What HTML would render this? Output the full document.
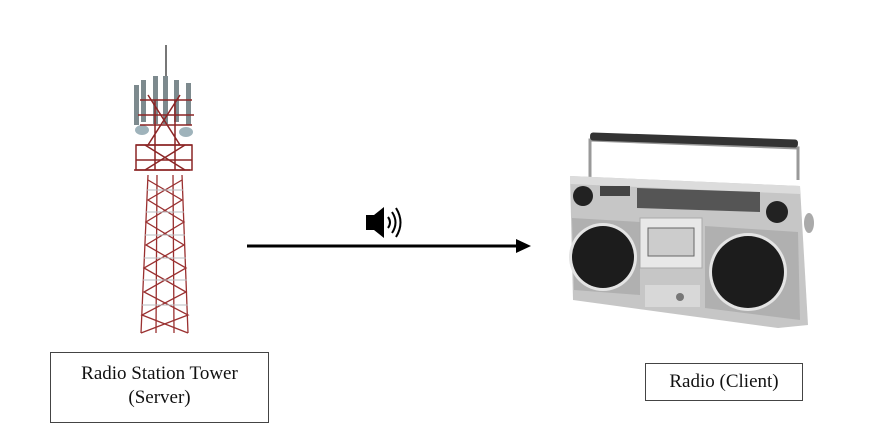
<!DOCTYPE html>
<html><head><meta charset="utf-8"><style>
html,body{margin:0;padding:0;background:#fff;}
body{width:871px;height:440px;position:relative;overflow:hidden;font-family:"Liberation Serif",serif;}
.box{position:absolute;border:1px solid #444;background:#fff;color:#111;text-align:center;font-size:19px;line-height:24px;box-sizing:border-box;}
</style></head><body>
<svg width="871" height="440" style="position:absolute;left:0;top:0">
<!-- tower -->
<g>
<line x1="166" y1="45" x2="166" y2="90" stroke="#777" stroke-width="2"/>
<g fill="#7d8a8e">
<rect x="134" y="85" width="5" height="40"/><rect x="141" y="80" width="5" height="42"/>
<rect x="153" y="76" width="5" height="48"/><rect x="163" y="76" width="5" height="48"/>
<rect x="174" y="80" width="5" height="42"/><rect x="186" y="83" width="5" height="42"/>
</g>
<g fill="#9fb3bb"><ellipse cx="142" cy="130" rx="7" ry="5"/><ellipse cx="186" cy="132" rx="7" ry="5"/></g>
<g stroke="#8b2525" stroke-width="1.5" fill="none">
<path d="M140 100 L192 100 M138 115 L194 115 M140 125 L192 125 M136 145 L192 145 M136 160 L192 160 M134 170 L190 170"/>
<path d="M148 95 L180 145 M180 95 L148 145 M145 145 L185 170 M185 145 L145 170 M155 100 L155 170 M175 100 L175 170"/>
<rect x="136" y="145" width="56" height="25"/>
</g>
<g stroke="#9a3030" stroke-width="1.3" fill="none">
<path d="M148 175 L141 333 M182 175 L188 333 M157 175 L156 333 M173 175 L174 333"/>
<path d="M148 180 L182 200 L146 222 L184 245 L144 268 L186 292 L142 315 L188 333"/>
<path d="M182 180 L148 200 L184 222 L146 245 L186 268 L144 292 L188 315 L141 333"/>
</g>
<g stroke="#b8bec2" stroke-width="1" fill="none">
<path d="M147 190 L183 190 M146 212 L184 212 M145 235 L185 235 M144 258 L186 258 M143 280 L187 280 M142 305 L188 305"/>
</g>
</g>
<!-- arrow -->
<line x1="247" y1="246" x2="518" y2="246" stroke="#000" stroke-width="3"/>
<polygon points="516,239 531,246 516,253" fill="#000"/>
<!-- speaker -->
<polygon points="366,215 374,215 384,207 384,238 374,230 366,230" fill="#000"/>
<path d="M388 217 Q392 222.5 388 228" stroke="#000" stroke-width="2" fill="none"/>
<path d="M392 212 Q399 222.5 392 233" stroke="#000" stroke-width="2" fill="none"/>
<path d="M396 208 Q405 222.5 396 237" stroke="#000" stroke-width="2" fill="none"/>
<!-- boombox -->
<g>
<path d="M590 178 L590 140 L798 148 L798 180" stroke="#999" stroke-width="3" fill="none"/>
<rect x="590" y="136" width="208" height="8" rx="3" fill="#333" transform="rotate(2 694 140)"/>
<path d="M570 176 L800 186 L808 325 L778 328 L573 300 Z" fill="#c6c6c6"/>
<path d="M570 176 L800 186 L800 194 L570 184 Z" fill="#dcdcdc"/>
<path d="M572 218 L640 222 L640 295 L574 290 Z" fill="#b0b0b0"/>
<path d="M705 226 L798 232 L800 320 L705 308 Z" fill="#b0b0b0"/>
<rect x="600" y="186" width="30" height="10" fill="#444"/>
<path d="M637 188 L760 192 L760 212 L637 208 Z" fill="#555"/>
<rect x="640" y="218" width="62" height="50" fill="#e8e8e8" stroke="#aaa"/>
<rect x="648" y="228" width="46" height="28" fill="#ccc" stroke="#666"/>
<circle cx="583" cy="196" r="10" fill="#222"/>
<circle cx="777" cy="212" r="11" fill="#222"/>
<circle cx="603" cy="257" r="34" fill="#e4e4e4"/>
<circle cx="603" cy="257" r="31" fill="#1c1c1c"/>
<circle cx="748" cy="272" r="39" fill="#e4e4e4"/>
<circle cx="748" cy="272" r="36" fill="#1c1c1c"/>
<rect x="645" y="285" width="55" height="22" fill="#d8d8d8"/>
<circle cx="680" cy="297" r="4" fill="#777"/>
<ellipse cx="809" cy="223" rx="5" ry="10" fill="#aaa"/>
</g>
</svg>
<div class="box" style="left:50px;top:352px;width:219px;height:71px;padding-top:9px;">Radio Station Tower<br>(Server)</div>
<div class="box" style="left:645px;top:363px;width:158px;height:38px;padding-top:6px;">Radio (Client)</div>
</body></html>
